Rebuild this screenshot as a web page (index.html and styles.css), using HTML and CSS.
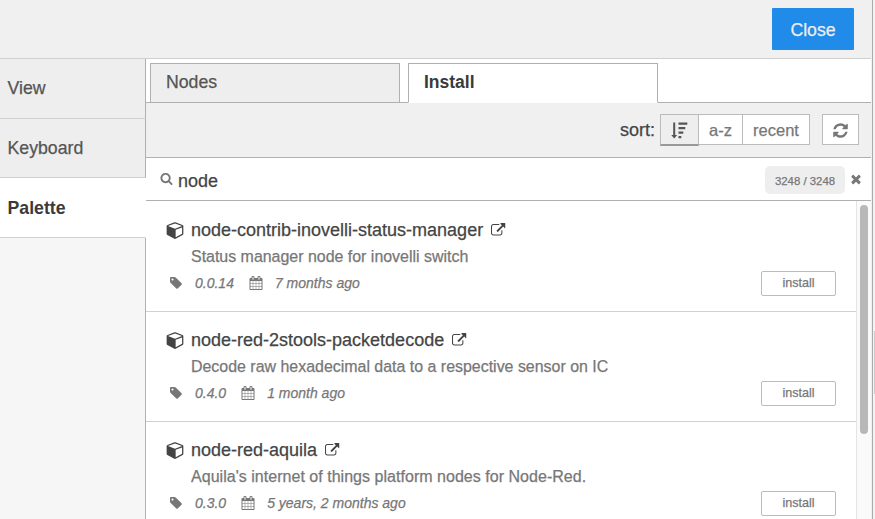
FILE: index.html
```
<!DOCTYPE html>
<html lang="en">
<head>
<meta charset="utf-8">
<title>User Settings</title>
<link rel="stylesheet" href="styles.css">
</head>
<body>
<svg class="defs" aria-hidden="true">
<symbol id="search" viewBox="0 0 1792 1792"><path d="M1216 832q0-185-131.5-316.5t-316.5-131.5-316.5 131.5-131.5 316.5 131.5 316.5 316.5 131.5 316.5-131.5 131.5-316.5zm512 832q0 52-38 90t-90 38q-54 0-90-38l-343-342q-179 124-399 124-143 0-273.5-55.5t-225-150-150-225-55.5-273.5 55.5-273.5 150-225 225-150 273.5-55.5 273.5 55.5 225 150 150 225 55.5 273.5q0 220-124 399l343 343q37 37 37 90z"/></symbol>
<symbol id="times" viewBox="0 0 1792 1792"><path d="M1490 1322q0 40-28 68l-136 136q-28 28-68 28t-68-28l-294-294-294 294q-28 28-68 28t-68-28l-136-136q-28-28-28-68t28-68l294-294-294-294q-28-28-28-68t28-68l136-136q28-28 68-28t68 28l294 294 294-294q28-28 68-28t68 28l136 136q28 28 28 68t-28 68l-294 294 294 294q28 28 28 68z"/></symbol>
<symbol id="cube" viewBox="-64 0 1792 1792"><path d="M896 1629l640-349v-636l-640 233v752zm-64-865l698-254-698-254-698 254zm832-252v768q0 35-18 65t-49 47l-704 384q-28 16-61 16t-61-16l-704-384q-31-17-49-47t-18-65v-768q0-40 23-73t61-47l704-256q22-8 44-8t44 8l704 256q38 14 61 47t23 73z"/></symbol>
<symbol id="external" viewBox="0 0 1792 1792"><path d="M1408 928v320q0 119-84.500 203.500t-203.500 84.500h-832q-119 0-203.500-84.500t-84.500-203.500v-832q0-119 84.500-203.500t203.500-84.500h704q14 0 23 9t9 23v64q0 14-9 23t-23 9h-704q-66 0-113 47t-47 113v832q0 66 47 113t113 47h832q66 0 113-47t47-113v-320q0-14 9-23t23-9h64q14 0 23 9t9 23zm384-864v512q0 26-19 45t-45 19-45-19l-176-176-652 652q-10 10-23 10t-23-10l-114-114q-10-10-10-23t10-23l652-652-176-176q-19-19-19-45t19-45 45-19h512q26 0 45 19t19 45z"/></symbol>
<symbol id="refresh" viewBox="0 0 1792 1792"><path d="M1639 1056q0 5-1 7-64 268-268 434.500t-478 166.500q-146 0-282.500-55t-243.500-157l-129 129q-19 19-45 19t-45-19-19-45v-448q0-26 19-45t45-19h448q26 0 45 19t19 45-19 45l-137 137q71 66 161 102t187 36q134 0 250-65t186-179q11-17 53-117 8-23 30-23h192q13 0 22.500 9.500t9.500 22.500zm25-800v448q0 26-19 45t-45 19h-448q-26 0-45-19t-19-45 19-45l138-138q-148-137-349-137-134 0-250 65t-186 179q-11 17-53 117-8 23-30 23h-199q-13 0-22.500-9.500t-9.500-22.500v-7q65-268 270-434.500t480-166.500q146 0 284 55.500t245 156.500l130-129q19-19 45-19t45 19 19 45z"/></symbol>
<symbol id="tag" viewBox="0 0 1792 1792"><path d="M576 448q0-53-37.500-90.500t-90.500-37.500-90.500 37.500-37.500 90.500 37.500 90.500 90.500 37.500 90.500-37.500 37.500-90.500zm1067 576q0 53-37 90l-491 492q-39 37-91 37-53 0-90-37l-715-716q-38-37-64.500-101t-26.500-117v-416q0-52 38-90t90-38h416q53 0 117 26.500t102 64.500l715 714q37 39 37 91z"/></symbol>
<symbol id="calendar" viewBox="0 0 1792 1792"><path d="M192 1664h288v-288h-288v288zm352 0h320v-288h-320v288zm-352-352h288v-320h-288v320zm352 0h320v-320h-320v320zm-352-384h288v-288h-288v288zm736 736h320v-288h-320v288zm-384-736h320v-288h-320v288zm768 736h288v-288h-288v288zm-384-352h320v-320h-320v320zm-352-864v-288q0-13-9.500-22.500t-22.500-9.500h-64q-13 0-22.500 9.500t-9.500 22.500v288q0 13 9.500 22.500t22.500 9.500h64q13 0 22.500-9.500t9.500-22.500zm736 864h288v-320h-288v320zm-384-384h320v-288h-320v288zm384 0h288v-288h-288v288zm32-480v-288q0-13-9.500-22.500t-22.500-9.500h-64q-13 0-22.500 9.500t-9.500 22.500v288q0 13 9.500 22.500t22.500 9.500h64q13 0 22.500-9.500t9.500-22.500zm384-64v1280q0 52-38 90t-90 38h-1408q-52 0-90-38t-38-90v-1280q0-52 38-90t90-38h128v-96q0-66 47-113t113-47h64q66 0 113 47t47 113v96h384v-96q0-66 47-113t113-47h64q66 0 113 47t47 113v96h128q52 0 90 38t38 90z"/></symbol>
<symbol id="sort" viewBox="0 0 17 17"><path d="M2.200 0.500h2v12.500h2L3.200 16.500.2 13h2zM7.500.5h8.800v2.200H7.500zM7.500 5h6.800v2.200H7.500zM7.500 9.500h4.800v2.200H7.500zM7.500 14h2.800v2.200H7.500z"/></symbol>
</svg>
<div class="app">
  <div class="dialog">
    <header class="header"><button class="close">Close</button></header>
    <div class="body">
      <nav class="side">
        <a class="side-item">View</a>
        <a class="side-item keyboard">Keyboard</a>
        <a class="side-item active">Palette</a>
        <div class="side-rest"></div>
      </nav>
      <main class="main">
        <div class="tabs">
          <div class="tab">Nodes</div>
          <div class="tab selected">Install</div>
        </div>
        <div class="toolbar">
          <span class="sort-label">sort:</span>
          <div class="group">
            <button class="sort-btn on"><svg class="i-sort"><use href="#sort"/></svg></button>
            <button class="sort-btn az">a-z</button>
            <button class="sort-btn recent">recent</button>
          </div>
          <button class="refresh"><svg class="i-refresh"><use href="#refresh"/></svg></button>
        </div>
        <div class="search">
          <svg class="i-search"><use href="#search"/></svg>
          <span class="query">node</span>
          <span class="count">3248 / 3248</span>
          <svg class="i-times"><use href="#times"/></svg>
        </div>
        <div class="results">
          <div class="list">
            <article class="item">
              <div class="title"><svg class="i-cube"><use href="#cube"/></svg><span>node-contrib-inovelli-status-manager</span><svg class="i-ext"><use href="#external"/></svg></div>
              <div class="desc">Status manager node for inovelli switch</div>
              <div class="meta"><svg class="i-tag"><use href="#tag"/></svg><span>0.0.14</span><svg class="i-cal"><use href="#calendar"/></svg><span>7 months ago</span><button class="install">install</button></div>
            </article>
            <article class="item">
              <div class="title"><svg class="i-cube"><use href="#cube"/></svg><span>node-red-2stools-packetdecode</span><svg class="i-ext"><use href="#external"/></svg></div>
              <div class="desc">Decode raw hexadecimal data to a respective sensor on IC</div>
              <div class="meta"><svg class="i-tag"><use href="#tag"/></svg><span>0.4.0</span><svg class="i-cal"><use href="#calendar"/></svg><span>1 month ago</span><button class="install">install</button></div>
            </article>
            <article class="item">
              <div class="title"><svg class="i-cube"><use href="#cube"/></svg><span>node-red-aquila</span><svg class="i-ext"><use href="#external"/></svg></div>
              <div class="desc wide">Aquila's internet of things platform nodes for Node-Red.</div>
              <div class="meta"><svg class="i-tag"><use href="#tag"/></svg><span>0.3.0</span><svg class="i-cal"><use href="#calendar"/></svg><span>5 years, 2 months ago</span><button class="install">install</button></div>
            </article>
          </div>
          <div class="track"><div class="thumb"></div></div>
        </div>
      </main>
    </div>
  </div>
  <div class="edge"><div class="grip"></div></div>
</div>
</body>
</html>
```
FILE: styles.css
```
* { box-sizing: border-box; }
body { margin: 0; font-family: "Liberation Sans", Arial, sans-serif; font-size: 18px; color: #444; background: #f0f0f0; overflow: hidden; -webkit-text-stroke: 0.25px currentColor; }
button { font-family: inherit; padding: 0; margin: 0; -webkit-text-stroke: 0.25px currentColor; }
svg { fill: currentColor; display: block; flex: none; }
.defs { display: none; }
.app { display: flex; width: 875px; height: 519px; }
.dialog { width: 871px; display: flex; flex-direction: column; flex: none; }
.header { height: 59px; flex: none; border-bottom: 1px solid #d0d0d0; display: flex; justify-content: flex-end; padding: 8px 17px 0 0; }
.close { width: 82px; height: 42px; border: 0; border-radius: 1px; background: #208be8; color: #eee; font-size: 17.7px; line-height: 42px; padding-top: 1px; }
.body { flex: 1; display: flex; min-height: 0; }
.side { width: 146px; flex: none; display: flex; flex-direction: column; color: #555; }
.side-item { height: 60px; flex: none; padding-left: 7.5px; line-height: 59px; font-size: 17.7px; background: #eee; border-right: 1px solid #b0b0b0; border-bottom: 1px solid #d0d0d0; }
.keyboard { height: 59px; }
.active { background: #fff; border-right-color: #fff; font-weight: bold; color: #3a3a3a; line-height: 60px; -webkit-text-stroke: 0; }
.side-rest { flex: 1; background: #f6f6f6; border-right: 1px solid #b0b0b0; }
.main { flex: 1; min-width: 0; display: flex; flex-direction: column; }
.tabs { height: 44px; flex: none; background: #fff; border-bottom: 1px solid #b0b0b0; display: flex; gap: 8px; padding: 4px 0 0 4px; }
.tab { width: 250px; height: 40px; border: 1px solid #b0b0b0; background: #eee; color: #555; padding-left: 15px; line-height: 37px; font-size: 17.7px; }
.selected { background: #fff; border-bottom-color: #fff; color: #3a3a3a; font-weight: bold; font-size: 17.5px; -webkit-text-stroke: 0; }
.toolbar { height: 55px; flex: none; background: #f0f0f0; border-bottom: 1px solid #b0b0b0; display: flex; justify-content: flex-end; align-items: flex-start; padding: 11px 12px 0 0; }
.sort-label { line-height: 32px; margin-right: 5px; }
.group { display: flex; margin-right: 12px; }
.sort-btn, .refresh { height: 31px; border: 1px solid #bbb; background: #fff; color: #777; font-size: 16.5px; line-height: 29px; display: flex; align-items: center; justify-content: center; padding-top: 1px; }
.on { width: 39px; height: 32px; background: #eee; border-bottom: 2px solid #999; color: #555; }
.i-sort { width: 17px; height: 17px; }
.az { width: 44px; border-left: 0; }
.recent { width: 67px; border-left: 0; }
.refresh { width: 37px; }
.i-refresh { width: 17px; height: 17px; }
.search { height: 43px; flex: none; background: #fff; border-bottom: 1px solid #b0b0b0; display: flex; align-items: center; padding: 0 8px 0 14px; }
.i-search { width: 13px; height: 13px; color: #777; margin: -2px 5px 0 0; }
.query { flex: 1; padding-top: 4px; }
.count { width: 80px; height: 28px; margin: 2px 4px 0 0; border-radius: 5px; background: #eee; color: #777; font-size: 11.4px; text-align: center; line-height: 30px; }
.i-times { width: 14px; height: 14px; color: #777; margin-top: -1px; }
.results { flex: 1; min-height: 0; display: flex; overflow: hidden; background: #fff; }
.list { flex: 1; }
.item { height: 110px; padding: 17px 20px 0; border-bottom: 1px solid #d0d0d0; }
.item:first-child { height: 111px; padding-top: 18px; }
.title { display: flex; align-items: center; height: 22px; }
.i-cube { width: 18px; height: 18px; margin-right: 7px; }
.i-ext { width: 14.5px; height: 14.5px; margin: 1px 0 0 8px; }
.desc { margin: 1px 0 0 25px; height: 29px; line-height: 30px; font-size: 15.95px; color: #777; }
.wide { font-size: 16px; letter-spacing: 0.03px; }
.meta { display: flex; align-items: center; height: 23px; font-size: 14px; font-style: italic; color: #777; }
.i-tag { width: 14px; height: 14px; margin: 0 12px 0 3px; }
.i-cal { width: 14px; height: 14px; margin: 0 12px 0 15px; }
.install { width: 75px; height: 25px; border: 1px solid #bbb; border-radius: 2px; background: #fff; color: #777; font-size: 12.6px; margin: 2px 0 0 auto; line-height: 23px; }
.track { width: 15px; background: #fafafa; border-left: 1px solid #e4e4e4; padding: 4px 3px 0; }
.thumb { width: 8px; height: 229px; border-radius: 4px; background: #b8b8b8; }
.edge { flex: 1; border-left: 1px solid #f0f0f0; background: #f3f3f3; box-shadow: inset 1px 0 #aaa; padding: 331px 0 0 2px; }
.grip { height: 63px; background: #ccc; }
```
